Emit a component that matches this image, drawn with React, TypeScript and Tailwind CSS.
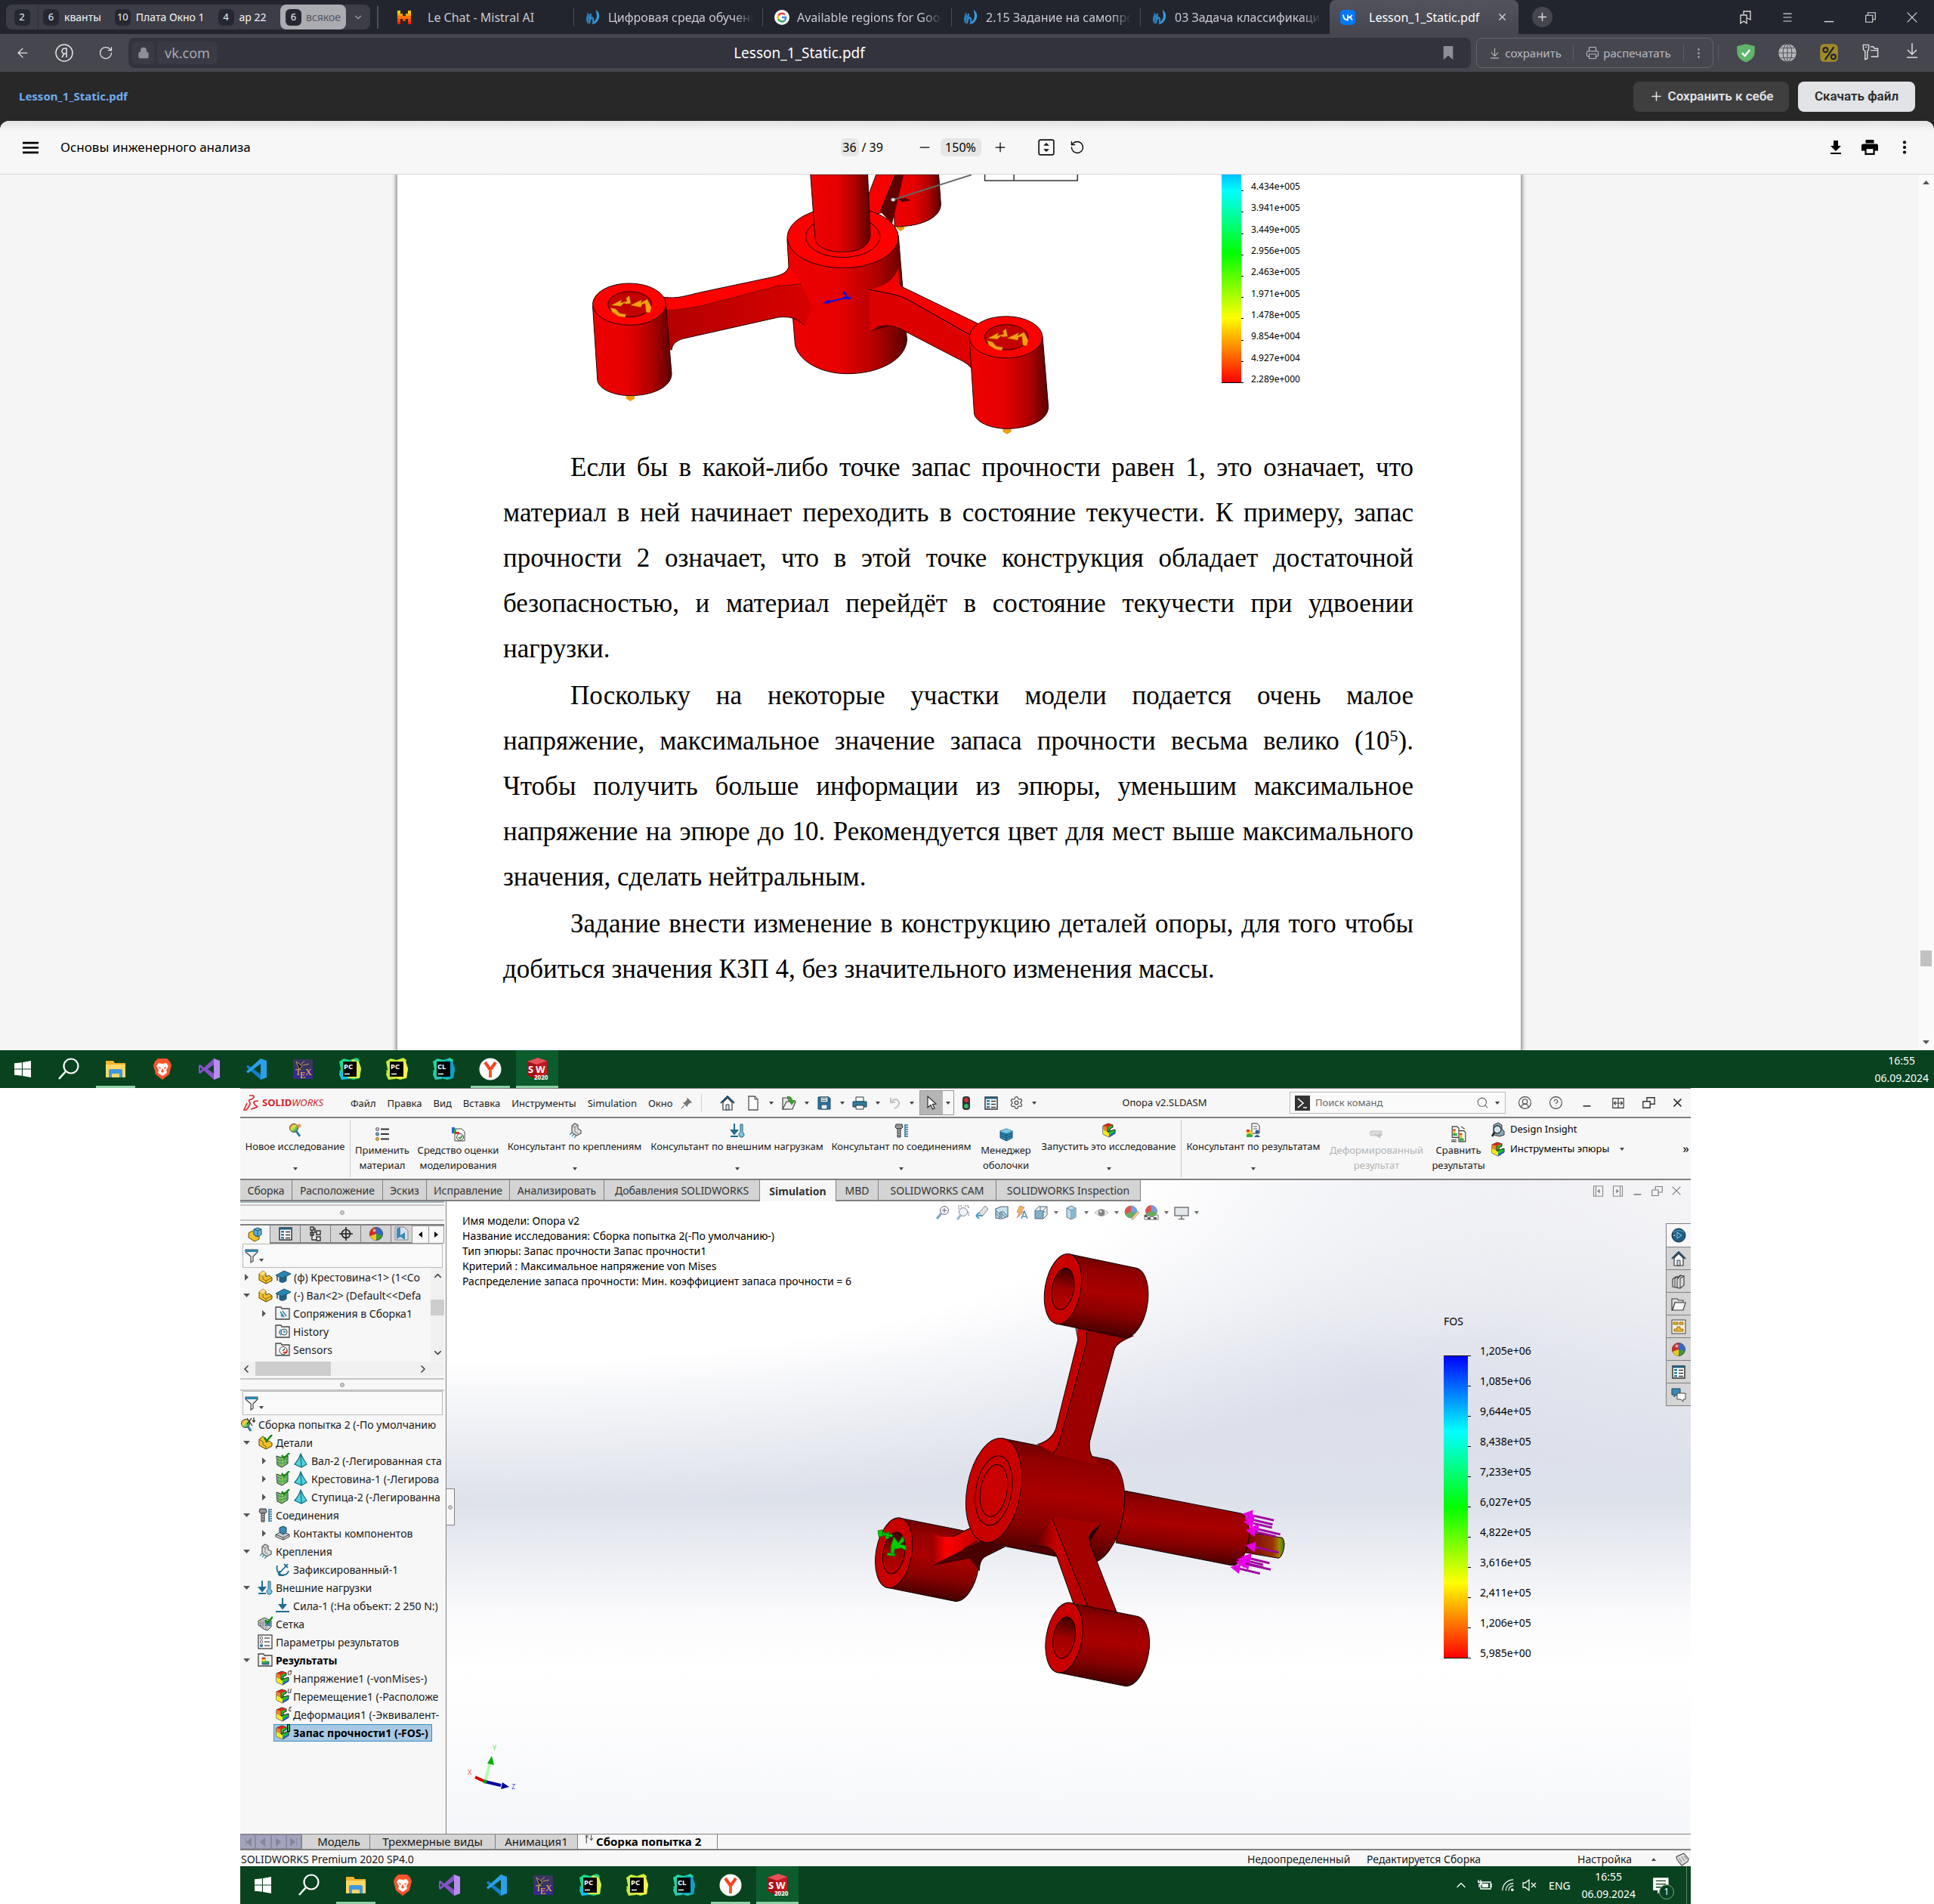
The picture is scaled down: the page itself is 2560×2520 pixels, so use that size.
import React from "react";
import {
  ArrowLeft, RotateCw, RotateCcw, Lock, X, Plus, Minus, ChevronDown, ChevronUp, ChevronLeft, ChevronRight,
  Search, EllipsisVertical, Printer, ArrowDownToLine, CircleUserRound, CircleHelp, Settings,
} from "lucide-react";

type Kids = { children?: React.ReactNode };

function Svg({ s = 20, vb = "0 0 20 20", children }: Kids & { s?: number; vb?: string }) {
  return (
    <svg width={s} height={s} viewBox={vb} fill="none" className="shrink-0" aria-hidden="true">
      {children}
    </svg>
  );
}

const Down = () => (
  <svg width="6" height="4" viewBox="0 0 6 4" className="shrink-0" aria-hidden="true"><path d="M0 0H6L3 4Z" fill="#444" /></svg>
);

/* ---------- browser ---------- */

function Chip({ n }: { n: string }) {
  return <span className="flex h-[22px] w-[21px] items-center justify-center rounded-md bg-[#262831] text-[13px] text-gray-100">{n}</span>;
}

const groups = [
  { n: "6", t: "кванты" },
  { n: "10", t: "Плата Окно 1" },
  { n: "4", t: "ар 22" },
];

const Flame = () => (
  <Svg s={20}>
    <path d="M3 2c0 3 3 4 2 8-1 3-2 6-1 9-3-2-4-7-2-11 .6-2 1-4 1-6Z" fill="#2d7fc1" />
    <path d="M14 0c5 4 5 9 3 13-2 4-5 6-9 6 4-3 7-7 7-11 0-3-1-5-1-8Z" fill="#3a9bdc" />
    <path d="M7 5 5 18M6 13c2-4 5-4 4 4" stroke="#2d8fd0" strokeWidth="2.200" />
  </Svg>
);
const Mistral = () => (
  <Svg s={20}>
    <path d="M1 1h4v4H1zM15 1h4v4h-4z" fill="#ffcd00" />
    <path d="M1 5h7v3H1zM12 5h7v3h-7z" fill="#ffa300" />
    <path d="M1 8h18v4H1z" fill="#ff7000" />
    <path d="M1 12h4v4H1zM8 12h4v3H8zM15 12h4v4h-4z" fill="#ff4900" />
    <path d="M1 16h4v3H1zM15 16h4v3h-4z" fill="#ff1a00" />
  </Svg>
);
const Google = () => (
  <Svg s={20}>
    <circle cx="10" cy="10" r="10" fill="#fff" />
    <path d="M14 6.400A5.500 5.500 0 0 0 5.200 7.600" stroke="#ea4335" strokeWidth="2.400" />
    <path d="M5.200 7.400a5.400 5.400 0 0 0 0 5.200" stroke="#fbbc05" strokeWidth="2.400" />
    <path d="M5.200 12.400a5.500 5.500 0 0 0 8.400 1.800" stroke="#34a853" strokeWidth="2.400" />
    <path d="M10 10h5.300a5.500 5.500 0 0 1-1.900 4.400" stroke="#4285f4" strokeWidth="2.300" />
  </Svg>
);
const Vk = () => (
  <Svg s={20}>
    <rect width="20" height="20" rx="5" fill="#0077ff" />
    <path d="M4 6.500c.2 4.500 2.300 7 6 7V6.500M15.500 6.500c-.6 2-2.500 3.400-5 3.400 2.500 0 4.600 1.600 5.300 3.700" stroke="#fff" strokeWidth="1.800" />
  </Svg>
);

const tabs = [
  { icon: <Mistral />, t: "Le Chat - Mistral AI", pad: true },
  { icon: <Flame />, t: "Цифровая среда обучени" },
  { icon: <Google />, t: "Available regions for Goog" },
  { icon: <Flame />, t: "2.15 Задание на самопров" },
  { icon: <Flame />, t: "03 Задача классификации" },
];

function TabStrip() {
  return (
    <div className="flex h-[45px] bg-[#23252e] text-[#c9cad0]">
      <div className="mt-[6px] ml-2 flex h-[33px] w-[482px] shrink-0 items-center rounded-lg bg-[#3d3d47] text-[14px] text-gray-100">
        <button className="flex h-full w-[43px] items-center justify-center border-r border-[#2e2f38]"><Chip n="2" /></button>
        {groups.map((g) => (
          <button key={g.t} className="flex h-full items-center gap-[7px] pr-[12px] pl-[6px]">
            <Chip n={g.n} /><span className="whitespace-nowrap">{g.t}</span>
          </button>
        ))}
        <button className="ml-auto flex h-full items-center gap-[6px] rounded-lg bg-[#abacb2] px-[7px] text-[#55565e]">
          <Chip n="6" /><span>всякое</span>
        </button>
        <button className="flex w-8 justify-center" aria-label="Группы"><ChevronDown size={14} color="#a5a5ad" /></button>
      </div>
      <div className="mx-[9px] mt-2 h-[30px] w-[2px] shrink-0 bg-[#50515a]" />
      {tabs.map((t) => (
        <button key={t.t} className="mt-[10px] flex h-[25px] w-[250px] items-center gap-[10px] overflow-hidden border-r border-[#4a4b54] pr-2 pl-[15px] text-left text-[16px] nth-[7]:border-0">
          {t.icon}
          <span className={t.pad ? "flex-1 pl-[11px]" : "flex-1 overflow-hidden whitespace-nowrap [mask-image:linear-gradient(to_right,black_85%,transparent_98%)]"}>{t.t}</span>
        </button>
      ))}
      <div className="flex h-[45px] w-[250px] items-center rounded-t-lg bg-linear-to-b from-[#53535d] to-[#46464f] px-[14px] text-[16px] text-white">
        <Vk /><span className="ml-[18px] flex-1">Lesson_1_Static.pdf</span>
        <button aria-label="Закрыть вкладку"><X size={15} color="#d8d8dc" /></button>
      </div>
      <button className="mt-[9px] ml-[18px] flex h-[27px] w-[27px] items-center justify-center rounded-full bg-[#46464f]" aria-label="Новая вкладка"><Plus size={17} color="#ddd" /></button>
      <div className="ml-auto flex h-[45px] items-center pr-[2px]">
        <button className="flex w-[55px] justify-center" aria-label="Закладки">
          <Svg s={20}><path d="M3 7h8v11l-4-3-4 3ZM7 6V2h9v11l-4-2" stroke="#ddd" strokeWidth="1.300" /></Svg>
        </button>
        <button className="flex w-[55px] justify-center" aria-label="Меню"><Svg s={14}><path d="M2 3H18M2 10H18M2 17H18" stroke="#ddd" strokeWidth="1.500" /></Svg></button>
        <button className="flex w-[55px] justify-center" aria-label="Свернуть"><Svg s={14}><path d="M1 18H19" stroke="#ddd" strokeWidth="2" /></Svg></button>
        <button className="flex w-[55px] justify-center" aria-label="Развернуть"><Svg s={14}><path d="M1 6H14V19H1ZM5 6V1H19V14H14" stroke="#ddd" strokeWidth="1.600" /></Svg></button>
        <button className="flex w-[55px] justify-center" aria-label="Закрыть"><Svg s={14}><path d="M1 1 19 19M19 1 1 19" stroke="#ddd" strokeWidth="1.600" /></Svg></button>
      </div>
    </div>
  );
}

function AddressBar() {
  return (
    <div className="flex h-[50px] items-center bg-[#46464f] text-[#c5c5cb]">
      <button className="ml-[2px] flex w-[55px] justify-center" aria-label="Назад"><ArrowLeft size={20} strokeWidth={1.500} color="#e4e4e8" /></button>
      <button className="flex w-[56px] justify-center" aria-label="Яндекс">
        <Svg s={24}><circle cx="10" cy="10" r="9.200" stroke="#e4e4e8" strokeWidth="1.200" /><path d="M12.500 15V5H10.400a2.900 2.900 0 0 0 0 5.800h2.100M10 10.800 7.500 15" stroke="#e4e4e8" strokeWidth="1.300" /></Svg>
      </button>
      <button className="flex w-[54px] justify-center" aria-label="Обновить"><RotateCw size={20} strokeWidth={1.500} color="#e4e4e8" /></button>
      <div className="flex h-10 flex-1 items-center rounded-lg bg-[#33333d] ml-[3px] text-[18px]">
        <div className="flex w-[120px] items-center">
          <span className="ml-[5px] flex h-[30px] w-[29px] items-center justify-center rounded-md bg-[#393a44]"><Lock size={16} fill="#8d8f98" color="#8d8f98" /></span>
          <a href="https://vk.com" className="ml-1 flex h-[30px] items-center rounded-md bg-[#393a44] px-[10px] text-[#a9aab2]">vk.com</a>
        </div>
        <span className="flex-1 text-center text-[19px] text-white">Lesson_1_Static.pdf</span>
        <button className="ml-[82px] mr-[21px]" aria-label="В закладки"><Svg s={18}><path d="M3 0H17V20L10 14 3 20Z" fill="#8d8f98" /></Svg></button>
      </div>
      <div className="ml-[7px] flex h-10 w-[314px] items-center rounded-lg border border-[#65656e] text-[15px] text-[#b9b9c0]">
        <button className="flex h-[22px] flex-1 items-center justify-center gap-[5px] border-r border-[#5c5c65]"><ArrowDownToLine size={17} strokeWidth={1.500} />сохранить</button>
        <button className="flex h-[22px] w-[146px] items-center justify-center gap-[5px] border-r border-[#5c5c65]"><Printer size={18} strokeWidth={1.500} />распечатать</button>
        <button className="flex w-[38px] justify-center" aria-label="Ещё"><EllipsisVertical size={17} strokeWidth={1.500} /></button>
      </div>
      <div className="ml-[6px] h-[22px] w-px bg-[#5c5c65]" />
      <div className="ml-[8px] flex pr-[2px]">
        <button className="flex w-[55px] justify-center" aria-label="Protect"><Svg s={26}><path d="M10 1 19 3V9C19 14 15 18 10 19.500 5 18 1 14 1 9V3Z" fill="#5fb56b" /><path d="M6 10l3 3 5-6" stroke="#fff" strokeWidth="1.800" /></Svg></button>
        <button className="flex w-[55px] justify-center" aria-label="Переводчик"><Svg s={26}><circle cx="10" cy="10" r="9" fill="#b5b6ba" /><path d="M1 10H19M10 1V19M3 5H17M3 15H17" stroke="#55565e" strokeWidth=".8" /><ellipse cx="10" cy="10" rx="4.500" ry="9" stroke="#55565e" strokeWidth=".8" /></Svg></button>
        <button className="flex w-[55px] justify-center" aria-label="Скидки"><Svg s={26}><rect x="1" y="1" width="18" height="18" rx="4" fill="#a08b27" /><path d="M15 4 6 17" stroke="#22242c" strokeWidth="1.800" /><circle cx="6.500" cy="7" r="2.300" stroke="#22242c" strokeWidth="1.700" /><circle cx="14.500" cy="14" r="2.300" stroke="#22242c" strokeWidth="1.700" /></Svg></button>
        <button className="flex w-[55px] justify-center" aria-label="Пароли"><Svg s={24}><path d="M2 2h6v5l-1.500 2v8L4 18V9L2 7ZM4 4.500h2M10 4h3l1.500 2H18v9h-7.500M10 8h8" stroke="#dcdce0" strokeWidth="1.200" /></Svg></button>
        <button className="flex w-[55px] justify-center" aria-label="Загрузки"><Svg s={20}><path d="M10 0V14M4 9l6 6 6-6M3 19H17" stroke="#dcdce0" strokeWidth="1.500" /></Svg></button>
      </div>
    </div>
  );
}

function VkHeader() {
  return (
    <div className="flex h-[65px] items-center bg-[#282828] pr-[25px] pl-[25px]">
      <a href="#file" className="text-[15px] font-bold text-[#71aaeb]">Lesson_1_Static.pdf</a>
      <button className="ml-auto flex h-10 w-[206px] items-center justify-center gap-[6px] rounded-lg bg-[#3f3f3f] font-['Roboto'] text-[17px] font-semibold text-[#e1e3e6]"><Plus size={19} />Сохранить к себе</button>
      <button className="ml-3 h-10 w-[155px] rounded-lg bg-[#e1e3e6] font-['Roboto'] text-[17px] font-semibold text-[#2a2a2a]">Скачать файл</button>
    </div>
  );
}

function PdfBar() {
  return (
    <div className="bg-[#282828]">
      <div className="flex h-[71px] items-center rounded-t-xl border-b border-[#d5d5d5] bg-[#f7f7f7] bg-linear-to-b from-[#e2e2e2] to-[#f7f7f7] to-20% pr-[28px] pl-[30px] text-[16px] text-black">
        <div className="flex flex-1 items-center gap-[29px]">
          <button aria-label="Содержание"><Svg s={21}><path d="M0 4H20M0 10H20M0 16H20" stroke="#000" strokeWidth="2.600" /></Svg></button>
          <span className="text-[17px]">Основы инженерного анализа</span>
        </div>
        <input aria-label="Страница" defaultValue="36" className="h-6 w-[24px] rounded-md bg-[#e6e6e6] text-center" />
        <span className="ml-1 w-[62px]">/ 39</span>
        <button className="flex w-[42px] justify-center" aria-label="Уменьшить"><Minus size={20} strokeWidth={1.500} /></button>
        <input aria-label="Масштаб" defaultValue="150%" className="h-6 w-[54px] rounded-md bg-[#e6e6e6] text-center" />
        <button className="flex w-[50px] justify-center" aria-label="Увеличить"><Plus size={20} strokeWidth={1.500} /></button>
        <button className="ml-[25px]" aria-label="По размеру страницы"><Svg s={22}><rect x="1" y="1" width="18" height="18" rx="2" stroke="#111" strokeWidth="1.500" /><path d="M6.500 8 10 4.500 13.500 8ZM6.500 12 10 15.500 13.500 12Z" fill="#111" /></Svg></button>
        <button className="ml-[20px] mr-[14px]" aria-label="Повернуть"><RotateCcw size={20} strokeWidth={1.600} /></button>
        <div className="flex flex-1 justify-end gap-[24px]">
          <button aria-label="Скачать"><Svg s={20}><path d="M7 1H13V8H17L10 15 3 8H7ZM3 17H17V19H3Z" fill="#000" /></Svg></button>
          <button aria-label="Печать"><Svg s={22}><path d="M5 1H15V5H5ZM2 6H18Q20 6 20 8V14H16V19H4V14H0V8Q0 6 2 6Z" fill="#000" /><path d="M6 12H14V17H6Z" fill="#fff" /></Svg></button>
          <button aria-label="Ещё"><Svg s={22}><g fill="#000"><circle cx="10" cy="4" r="1.900" /><circle cx="10" cy="10" r="1.900" /><circle cx="10" cy="16" r="1.900" /></g></Svg></button>
        </div>
      </div>
    </div>
  );
}

function PdfFigure() {
  const e = { stroke: "#200", strokeWidth: 1, vectorEffect: "non-scaling-stroke" as const };
  const boss = (dx: number, dy: number) => (
    <g transform={`translate(${dx} ${dy})`}>
      <path d="M98 905h16v18l-8 10-8-10Z" fill="#f39a10" />
      <path d="M35 555 44 850C46 885 75 911 106 911 145 911 183 880 184 825L173 545Z" fill="url(#cyl)" {...e} />
      <ellipse cx="104" cy="548" rx="69" ry="83" fill="#ff0000" {...e} />
      <ellipse cx="105" cy="548" rx="41" ry="50" fill="#c40000" {...e} />
      <path d="M70 552 90 530 88 542 100 536 98 524 104 514 107 545 98 547 94 543 88 556ZM106 552 128 530 126 542 138 528 146 560 143 582 136 580 134 545 128 548 126 560ZM68 562 78 566 86 584 98 588 96 600 84 596 72 580Z" fill="#f5a012" stroke="#9a5a00" strokeWidth=".5" vectorEffect="non-scaling-stroke" />
    </g>
  );
  return (
    <svg className="h-[350px] w-[674px] shrink-0" viewBox="0 33 961 1050" preserveAspectRatio="none" role="img" aria-label="Эпюра запаса прочности опоры">
      <defs>
        <linearGradient id="cyl"><stop offset="0" stopColor="#ee0000" /><stop offset=".45" stopColor="#e60000" /><stop offset=".75" stopColor="#b00000" /><stop offset="1" stopColor="#5a0000" /></linearGradient>
        <linearGradient id="arm"><stop offset="0" stopColor="#b00000" /><stop offset="1" stopColor="#d80000" /></linearGradient>
      </defs>
      <path d="M609 232h14v16l-7 10-7-10Z" fill="#f39a10" />
      <path d="M600 33H688L692 150C692 205 655 240 605 240Z" fill="url(#cyl)" {...e} />
      <path d="M570 33H606L580 185 540 200Z" fill="#f80000" {...e} />
      <path d="M606 33 578 180 600 230 622 33Z" fill="#5c0000" />
      <path d="M606 33 578 180" {...e} />
      <path d="M612 130 625 126 636 136 618 142Z" fill="#500000" />
      <path d="M402 290 405 400 417 710C425 780 470 824 515 824 575 824 625 770 628 690L618 430 612 275Z" fill="url(#cyl)" {...e} />
      <ellipse cx="507" cy="283" rx="105" ry="121" fill="#ff0000" {...e} />
      <ellipse cx="507" cy="280" rx="70" ry="82" fill="#ff0000" {...e} />
      <path d="M446 33 455 290C456 320 480 342 508 340 540 340 558 315 559 270L554 33Z" fill="url(#cyl)" {...e} />
      <path d="M160 520C195 525 200 520 240 500L375 440C395 430 400 420 405 400L428 467C415 472 400 473 385 476L240 555C215 566 195 572 160 572Z" fill="#ff0000" />
      <path d="M170 520C195 525 200 520 240 500L375 440C395 430 402 420 405 400M428 467C415 472 400 473 385 476L240 555C215 566 195 572 170 572" fill="none" {...e} />
      <path d="M150 572C195 572 215 566 240 555L385 476C400 473 415 472 428 467L450 560 435 632C420 602 405 595 385 600L205 685C190 695 185 710 184 730H150Z" fill="url(#arm)" />
      <path d="M435 632C420 602 405 595 385 600L205 685C190 695 185 710 184 730" fill="none" {...e} />
      <path d="M612 400 613 460 618 478 785 648 760 690 630 530C610 508 590 505 557 490 590 475 605 450 612 400Z" fill="#f40000" />
      <path d="M613 460 618 478 765 628M745 668 630 530C610 508 590 505 557 490" fill="none" {...e} />
      <path d="M557 490C590 505 610 508 630 530L760 690V800H748C740 780 730 770 722 762L615 645C595 630 575 632 557 660Z" fill="#dc0000" />
      <path d="M745 668 630 530C610 508 590 505 557 490M748 795C740 780 730 770 722 762L615 645C600 632 585 630 573 638" fill="none" {...e} />
      <path d="M557 660C570 635 585 628 600 636 585 638 570 648 557 660Z" fill="#500000" />
      {boss(0, 0)}
      {boss(711, 131)}
      <path d="M515 522 475 541M515 522 510 500" stroke="#1010e0" strokeWidth="2" vectorEffect="non-scaling-stroke" />
      <path d="M468 545 480 530 484 544ZM508 494 516 508 507 510ZM508 518h14v10h-14Z" fill="#1010e0" />
      <path d="M602 133 750 34" stroke="#666" strokeWidth="2" vectorEffect="non-scaling-stroke" />
      <ellipse cx="602" cy="133" rx="4" ry="7" fill="#ddd" stroke="#555" />
      <path d="M775 33V57H950V33M830 33V57" fill="none" stroke="#333" strokeWidth="1.500" vectorEffect="non-scaling-stroke" />
    </svg>
  );
}

const pdfScale = ["4.434e+005", "3.941e+005", "3.449e+005", "2.956e+005", "2.463e+005", "1.971e+005", "1.478e+005", "9.854e+004", "4.927e+004", "2.289e+000"];

function PdfViewer() {
  return (
    <div className="flex h-[1159px] overflow-hidden bg-[#f5f5f5]">
      <div className="flex flex-1 justify-center">
        <article className="w-[1487px] bg-white pr-[142px] pl-[140px] font-['Liberation_Serif',serif] text-[35px] leading-[60px] text-black shadow-[0_0_5px_2px_#888]">
          <div className="flex pl-[94px] font-['Noto_Sans']">
            <PdfFigure />
            <div className="ml-[183px] flex">
              <svg width="29" height="277" viewBox="0 0 29 277" className="shrink-0" aria-hidden="true">
                <defs><linearGradient id="pl" x1="0" y1="0" x2="0" y2="1"><stop offset="0" stopColor="#00bfff" /><stop offset=".08" stopColor="#00ffff" /><stop offset=".38" stopColor="#00ff00" /><stop offset=".69" stopColor="#ffff00" /><stop offset="1" stopColor="#ff0000" /></linearGradient></defs>
                <rect width="26" height="275" fill="url(#pl)" />
                <path d="M26 21.500h3M26 49.500h3M26 78.500h3M26 106.500h3M26 134.500h3M26 162.500h3M26 190.500h3M26 219.500h3M26 247.500h3M0 275.500H29" stroke="#000" />
              </svg>
              <div className="mt-[9px] ml-[10px] flex h-[269px] flex-col justify-between text-[12px] leading-[14px]">
                {pdfScale.map((v) => <span key={v}>{v}</span>)}
              </div>
            </div>
          </div>
          <div className="mt-2 flex flex-col gap-[2px] text-justify indent-[89px]">
            <p>Если бы в какой-либо точке запас прочности равен 1, это означает, что материал в ней начинает переходить в состояние текучести. К примеру, запас прочности 2 означает, что в этой точке конструкция обладает достаточной безопасностью, и материал перейдёт в состояние текучести при удвоении нагрузки.</p>
            <p>Поскольку на некоторые участки модели подается очень малое напряжение, максимальное значение запаса прочности весьма велико (10<sup className="text-[22px] leading-[0]">5</sup>). Чтобы получить больше информации из эпюры, уменьшим максимальное напряжение на эпюре до 10. Рекомендуется цвет для мест выше максимального значения, сделать нейтральным.</p>
            <p>Задание внести изменение в конструкцию деталей опоры, для того чтобы добиться значения КЗП 4, без значительного изменения массы.</p>
          </div>
        </article>
      </div>
      <div className="flex w-[21px] flex-col items-center justify-between bg-[#fafafa] py-2">
        <svg width="9" height="5" viewBox="0 0 9 5"><path d="M0 5H9L4.500 0Z" fill="#555" /></svg>
        <div className="mt-[1000px] h-[21px] w-[15px] bg-[#c1c1c1]" />
        <svg width="9" height="5" viewBox="0 0 9 5" className="mt-[85px]"><path d="M0 0H9L4.500 5Z" fill="#555" /></svg>
      </div>
    </div>
  );
}

/* ---------- task bar ---------- */

const JB = ({ a, b, c, t }: { a: string; b: string; c: string; t: string }) => (
  <Svg s={30} vb="0 0 30 30">
    <path d="M1 5 7 1 15 3 24 0 28 3 26 10 30 14 28 27 20 29 12 27 4 29 1 22 3 15Z" fill={a} />
    <path d="M18 2 27 5 30 14 28 27 12 27Z" fill={b} />
    <path d="M1 16 4 29 14 28Z" fill={c} />
    <rect x="6" y="5" width="18" height="20" fill="#000" />
    <text x="7" y="15" fontSize="9.500" fontWeight="700" fill="#fff" fontFamily="Noto Sans">{t}</text>
    <path d="M8 21.500H15" stroke="#fff" strokeWidth="1.500" />
  </Svg>
);

const idle = "border-transparent";
const apps: { id: string; cls: string; icon: React.ReactNode }[] = [
  { id: "Поиск", cls: idle, icon: <Svg s={30} vb="0 0 30 30"><circle cx="18" cy="11" r="9.500" stroke="#fff" strokeWidth="2.200" /><path d="M11 18 2 28" stroke="#fff" strokeWidth="2.600" /></Svg> },
  { id: "Проводник", cls: "border-[#8fcfa5]", icon: <Svg s={30} vb="0 0 30 30"><path d="M2 4H12L14 7H28V26H2Z" fill="#f2b32a" /><path d="M2 9H28V26H2Z" fill="#ffd766" /><path d="M6 26V17Q6 15 8 15H22Q24 15 24 17V26H20V21H10V26Z" fill="#3f97e0" /></Svg> },
  { id: "Brave", cls: idle, icon: <Svg s={30} vb="0 0 30 30"><path d="M9 1H21L25 5 27 10 24 22 15 29 6 22 3 10 5 5Z" fill="#fb542b" /><path d="M10 7 15 8 20 7 23 11 20 16 21 20 15 24 9 20 10 16 7 11Z" fill="#fff" /><path d="M9 12 13 13 12 15ZM21 12 17 13 18 15ZM15 14 17 18 15 20 13 18Z" fill="#fb542b" /></Svg> },
  { id: "Visual Studio", cls: idle, icon: <Svg s={30} vb="0 0 30 30"><path d="M21 1 29 4V26L21 29 8 17 3 21 1 20V10L3 9 8 13Z" fill="#8650c8" /><path d="M21 1 29 4V26L21 29Z" fill="#b98af0" /><path d="M21 9V21L13 15ZM3 12.500V17.500L5.500 15Z" fill="#08421f" /></Svg> },
  { id: "VS Code", cls: idle, icon: <Svg s={30} vb="0 0 30 30"><path d="M21 1 29 4V26L21 29 2 12 4 9.500 21 22Z" fill="#1080cc" /><path d="M21 1 29 4V26L21 29V8L4 20.500 2 18Z" fill="#2a9fea" /></Svg> },
  { id: "TeX", cls: idle, icon: <Svg s={28} vb="0 0 28 28"><rect x="1" y="1" width="26" height="26" fill="#372a8c" /><path d="M1 1H27V11L14 18 1 12Z" fill="#3a3560" /><path d="M5 4 13 10 9 14ZM11 8l5-5M14 9l8-2" fill="#151020" stroke="#b3a35a" /><text x="4" y="22" fontSize="12" fill="#f0c030" fontFamily="Liberation Serif">T</text><text x="10" y="26" fontSize="12" fill="#f0c030" fontFamily="Liberation Serif">E</text><text x="17" y="22" fontSize="12" fill="#f0c030" fontFamily="Liberation Serif">X</text></Svg> },
  { id: "PyCharm", cls: idle, icon: <JB a="#21d789" b="#d8f04a" c="#07c3f2" t="PC" /> },
  { id: "PyCharm CE", cls: idle, icon: <JB a="#c5f03c" b="#f4f24a" c="#c8e63c" t="PC" /> },
  { id: "CLion", cls: idle, icon: <JB a="#21d7a0" b="#0aa0c8" c="#22c8b0" t="CL" /> },
  { id: "Яндекс Браузер", cls: "border-[#8fcfa5]", icon: <Svg s={30} vb="0 0 30 30"><circle cx="15" cy="15" r="14.500" fill="#fff" /><path d="M8 6 15 16 22 6" stroke="#fc3f1d" strokeWidth="4" /><path d="M15 15V26" stroke="#fc5a1d" strokeWidth="4" /></Svg> },
  { id: "SolidWorks", cls: "border-[#8fcfa5] bg-[#0d5c2d]", icon: <Svg s={30} vb="0 0 30 30"><path d="M2 5 16 0 28 4V22L14 28 2 23Z" fill="#c11920" /><path d="M2 5 16 0 28 4 14 9Z" fill="#e4525a" /><path d="M14 9V28L2 23V5Z" fill="#a60f16" /><text x="3" y="20" fontSize="13" fontWeight="700" fill="#fff" fontFamily="Noto Sans">S</text><text x="13" y="20" fontSize="13" fontWeight="700" fill="#fff" fontFamily="Noto Sans">W</text><text x="11" y="29" fontSize="8" fontWeight="700" fill="#fff" fontFamily="Noto Sans">2020</text></Svg> },
];

function TaskBar({ children }: Kids) {
  return (
    <div className="flex h-[50px] bg-[#08421f] text-[15px] text-white">
      <button className="flex w-[60px] items-center justify-center" aria-label="Пуск">
        <Svg s={22}><path d="M0 3 9 2V9.500H0ZM10 1.800 20 0V9.500H10ZM0 10.500H9V18L0 17ZM10 10.500H20V20L10 18.200Z" fill="#fff" /></Svg>
      </button>
      {apps.map((a) => (
        <button key={a.id} aria-label={a.id} className={a.id === "SolidWorks" ? "flex w-[62px] justify-center px-[3px]" : "flex w-[62px] justify-center px-[5px]"}>
          <span className={"flex h-full w-full items-center justify-center border-b-3 pt-[2px] " + a.cls}>{a.icon}</span>
        </button>
      ))}
      <div className="ml-auto flex items-center">{children}</div>
    </div>
  );
}

const Clock = () => (
  <div className="text-center text-[14px] leading-[23px]"><div>16:55</div><div>06.09.2024</div></div>
);

/* ---------- SolidWorks icons ---------- */

const ic = {
  home: <Svg><path d="M1 10 10 1 19 10" stroke="#1d4f6d" strokeWidth="2" /><path d="M4 9V19H16V9L10 3Z" fill="#fff" stroke="#333" strokeWidth="1.200" /><path d="M8 12H12V19H8Z" stroke="#333" fill="#cde" /></Svg>,
  doc: <Svg><path d="M4 1H12L16 5V19H4Z" fill="#fff" stroke="#555" strokeWidth="1.300" /><path d="M12 1V5H16" stroke="#555" /></Svg>,
  open: <Svg><path d="M2 3H8L10 5V18H2Z" fill="#e6e6e6" stroke="#444" strokeWidth="1.200" /><path d="M2 18 7 8H19L15 18Z" fill="#eee" stroke="#444" strokeWidth="1.200" /><path d="M8 2Q14 1 14 8M11 7 14 11 17 7Z" stroke="#3a9a2e" strokeWidth="2" fill="#3a9a2e" /></Svg>,
  save: <Svg><path d="M2 2H16L18 4V18H2Z" fill="#2a78a0" stroke="#17425a" /><path d="M5 2H15V9H5ZM6 12H14V18H6Z" fill="#e8eef2" stroke="#17425a" /><path d="M6.500 4H13M6.500 6.500H13" stroke="#567" /></Svg>,
  print: <Svg><path d="M5 2H15V8H5Z" fill="#fff" stroke="#333" /><path d="M1 8H19V15H1Z" fill="#2f7da6" stroke="#17425a" /><path d="M5 13H15V18H5Z" fill="#fff" stroke="#333" /></Svg>,
  undo: <Svg><path d="M4 3V9H10M4 9Q12 1 15 9 16 14 9 17" stroke="#c2c2c2" strokeWidth="2" /></Svg>,
  arrow: <Svg><path d="M5 1V16L9 12.500 11.500 18 14 17 11.500 11.500 16 11Z" fill="#fff" stroke="#222" strokeWidth="1.100" /></Svg>,
  light: <Svg><rect x="5" y="1" width="10" height="18" rx="4" fill="#333" /><circle cx="10" cy="6" r="3" fill="#c33" /><circle cx="10" cy="14" r="3" fill="#3b6" /></Svg>,
  list: <Svg><rect x="2" y="2" width="16" height="16" fill="#fff" stroke="#333" strokeWidth="1.500" /><path d="M2 2H18V4.500H2Z" fill="#1f5f86" /><path d="M4 6H8V8.500H4ZM4 10H8V12.500H4ZM4 14H8V16.500H4Z" fill="#2a78a0" /><path d="M10 7.500H16M10 11.500H16M10 15.500H16" stroke="#333" strokeWidth="1.400" /></Svg>,
  lens: <Svg><defs><linearGradient id="rb" x1="0" x2="1" y1="0" y2="1"><stop offset="0" stopColor="#f05030" /><stop offset=".4" stopColor="#f0e040" /><stop offset=".7" stopColor="#50c050" /><stop offset="1" stopColor="#4080d0" /></linearGradient></defs><circle cx="8" cy="7" r="5.500" fill="url(#rb)" stroke="#444" /><path d="M11 11 16 18" stroke="#2a78a0" strokeWidth="3" /><path d="M15 1v6M12 4h6M13 2l4 4M17 2l-4 4" stroke="#e08020" strokeWidth=".9" /></Svg>,
  study: <Svg><circle cx="7" cy="9" r="5.500" fill="url(#rb)" stroke="#444" /><path d="M10 13 14 19" stroke="#2a78a0" strokeWidth="3" /><path d="M9 2 16 12M15 2 9 10M18 1v6M16 5l2 2 2-2" stroke="#333" strokeWidth="1.300" /></Svg>,
  mat: <Svg><path d="M8 3.500H19M8 10H19M8 16.500H19" stroke="#333" strokeWidth="2" /><circle cx="3.500" cy="3.500" r="2" fill="#ccc" stroke="#555" /><circle cx="3.500" cy="10" r="2" fill="#6bc" stroke="#357" /><circle cx="3.500" cy="16.500" r="2" fill="#eb3" stroke="#863" /></Svg>,
  eval: <Svg><path d="M5 3H14L18 7V19H5Z" fill="#fff" stroke="#444" /><path d="M1 1H5V9H1Z" fill="#2060e0" /><path d="M4 3H7V10H4Z" fill="#30b040" /><path d="M5 7H11V10H5Z" fill="#e03020" /><circle cx="12" cy="14" r="4.500" fill="#eee" stroke="#444" /><path d="M10 14l2 2 3-4" stroke="#2a9a2a" strokeWidth="1.700" /></Svg>,
  fix: <Svg><path d="M6 4 10 1 14 3V8L18 10V14L12 17 6 13Z" fill="#ddd" stroke="#555" strokeWidth="1.200" /><path d="M10 6V12L14 14M6 4 10 6 14 3" stroke="#777" /><path d="M6 13 3 16M9 15 6 18M12 17 9 20" stroke="#3a86a8" strokeWidth="1.200" /></Svg>,
  load: <Svg><path d="M6 1V14M2 10 6 15 10 10ZM1 18H11" stroke="#1f6e94" strokeWidth="2" fill="#1f6e94" /><path d="M14 2H17V12.500A3.500 3.500 0 1 1 14 12.500Z" fill="#7cc4e0" stroke="#2a5a74" /></Svg>,
  bolt: <Svg><path d="M3 2H11L12 6 10 8H4L2 6Z" fill="#999" stroke="#333" /><path d="M5 8H9V19H5Z" fill="#ccc" stroke="#333" /><path d="M5 11H9M5 14H9M5 17H9" stroke="#333" /><path d="M15 2V19M15 3h4M15 6h4M15 9h4M15 12h4M15 15h4M15 18h4" stroke="#2a78a0" strokeWidth="1.500" /></Svg>,
  shell: <Svg><path d="M2 6 10 3 18 6V15L10 19 2 15Z" fill="#2e86b2" stroke="#17506e" /><path d="M2 6 10 9 18 6 10 3Z" fill="#7cc8e8" /><path d="M2 9 10 12 18 9M2 12 10 15 18 12M10 9V19" stroke="#17506e" /></Svg>,
  plot: <Svg><path d="M2 4 9 1 15 3V6L11 8V11L18 9V14L10 19 2 15Z" fill="#20c030" stroke="#222" /><path d="M2 4 9 1 15 3 8 6Z" fill="#e02818" /><path d="M2 4 8 6V12L2 9Z" fill="#f08020" /><path d="M2 9 8 12 10 13V19L2 15Z" fill="#f4e820" /><path d="M10 16.500 18 12V14L10 19Z" fill="#2060e0" /><path d="M8 6V12L11 11M8 12 10 13" stroke="#222" strokeWidth=".8" /></Svg>,
  plotDoc: <Svg><path d="M8 1H15L18 4V14H8Z" fill="#fff" stroke="#333" /><path d="M10 5h5M10 8h5" stroke="#555" /><path d="M1 9H5L9 13V19H1Z" fill="#f0d030" /><path d="M1 9H5V12H1Z" fill="#e03020" /><path d="M5 14 9 16V19H1V16Z" fill="#30b040" /><circle cx="15" cy="12" r="2.500" fill="#2a5a94" /><path d="M11 19Q15 13 19 19Z" fill="#2a5a94" /></Svg>,
  greyBox: <Svg><path d="M2 6H17V12H2Z" fill="#ddd" stroke="#c2c2c2" /><path d="M8 10 14 14V10L16 12" stroke="#c2c2c2" strokeWidth="2" /></Svg>,
  cmp: <Svg s={22}><path d="M2 1H8L10 3V14H2ZM10 6H16L18 8V19H10Z" fill="#fff" stroke="#333" /><path d="M3 4h3v7h-3ZM11 9h3v8h-3Z" fill="#f0c030" /><path d="M3 4h3v2h-3ZM11 9h3v2h-3Z" fill="#e03020" /><path d="M3 9h5v3h-5ZM11 15h5v3h-5Z" fill="#30b040" /><path d="M1 17h6M1 19h6M13 1l4 3" stroke="#333" /></Svg>,
  insight: <Svg><path d="M4 4 10 1 15 4V9L18 12V17L12 19 4 17Z" fill="#8ab" stroke="#333" /><circle cx="9" cy="10" r="5" fill="#cfe4ee" stroke="#333" strokeWidth="1.300" /><path d="M5 14 2 19" stroke="#222" strokeWidth="2.500" /></Svg>,
  funnel: <Svg><path d="M2 2H18V5L12 11V17L9 19V11L2 5Z" fill="#eee" stroke="#444" strokeWidth="1.200" /><path d="M2 2H18V5H2Z" fill="#2a86b0" /></Svg>,
  part: <Svg><path d="M2 6 7 2 11 5V10L15 8 19 11V15L11 19 2 14Z" fill="#f2c12e" stroke="#5a4000" /><path d="M2 6 7 9V13L11 15 19 11M11 15V19M7 9 11 5" stroke="#8a6500" /><path d="M2 6 7 2 11 5 7 9Z" fill="#ffe07a" /></Svg>,
  partOk: <Svg><path d="M2 6 7 2 11 5V10L15 8 19 11V15L11 19 2 14Z" fill="#f2c12e" stroke="#5a4000" /><path d="M2 6 7 9V13L11 15V19" stroke="#8a6500" /><path d="M9 4 12 8 19 0" stroke="#128a12" strokeWidth="2.600" /></Svg>,
  asm: <Svg><path d="M1 8 6 5 10 8V12L15 12V16L9 19 1 14Z" fill="#f2c12e" stroke="#6b4d00" /><path d="M8 3 13 1 18 3V10L13 13 8 10Z" fill="#5fb3dc" stroke="#17506e" /><path d="M8 3 13 5 18 3M13 5V13" stroke="#17506e" /></Svg>,
  cap: <Svg><path d="M0 8 11 2 20 6 9 12Z" fill="#2a86b0" stroke="#1d4f6d" /><path d="M5 11V16Q9 19 14 15V9L9 12Z" fill="#1f6488" stroke="#1d4f6d" /><path d="M2 9V15" stroke="#444" strokeWidth="1.500" /></Svg>,
  folderClip: <Svg><path d="M1 2H8L9 4H19V18H1Z" fill="#f2f2f2" stroke="#444" strokeWidth="1.300" /><path d="M7 8 12 15M10 7 15 14M8 12 10 15" stroke="#2a86b0" strokeWidth="1.400" /></Svg>,
  folderHist: <Svg><path d="M1 2H8L9 4H19V18H1Z" fill="#f2f2f2" stroke="#444" strokeWidth="1.300" /><circle cx="12" cy="11" r="4" stroke="#444" /><path d="M12 9V11H14M8 8Q4 11 8 15" stroke="#2a86b0" strokeWidth="1.500" /></Svg>,
  folderSens: <Svg><path d="M1 2H8L9 4H19V18H1Z" fill="#f2f2f2" stroke="#444" strokeWidth="1.300" /><circle cx="11" cy="11.500" r="5" fill="#fff" stroke="#444" /><path d="M10 12 13 9" stroke="#333" strokeWidth="1.300" /><path d="M11 14h4l1-3" stroke="#e03020" strokeWidth="1.800" /></Svg>,
  folderRes: <Svg><path d="M1 2H8L9 4H19V18H1Z" fill="#f2f2f2" stroke="#444" strokeWidth="1.300" /><path d="M6 7H10V12H15V16H6Z" fill="#30b040" stroke="#333" strokeWidth=".6" /><path d="M6 7H10V9H6Z" fill="#e03020" /><path d="M6 9H10V12H6Z" fill="#f0e030" /><path d="M7 14.500H15V16H7Z" fill="#2060e0" /></Svg>,
  mesh: <Svg><path d="M2 4 8 6 17 4V14L9 19 3 16Z" fill="#8fd05a" stroke="#333" /><path d="M5 5V17M8 6V18M12 6V17M15 5V15M2 8 8 10 17 8M2 12 8 14 17 12" stroke="#386" strokeWidth=".8" /><path d="M9 3 12 7 19 0" stroke="#128a12" strokeWidth="2.400" /></Svg>,
  tetra: <Svg><path d="M10 1Q13 8 18 15L11 19 2 15Q8 8 10 1Z" fill="#4fd3dd" stroke="#1a6c80" strokeWidth="1.200" /><path d="M10 1 11 19" stroke="#1a6c80" strokeWidth="1.200" /></Svg>,
  contact: <Svg><path d="M1 12 9 8 19 12V15L11 19 1 15Z" fill="#ccc" stroke="#444" /><path d="M1 12 11 16 19 12M11 16V19" stroke="#444" /><path d="M6 3 11 1 15 3V9L11 12 6 9Z" fill="#3a8ab4" stroke="#17425a" /></Svg>,
  fixed: <Svg><path d="M3 5Q1 14 8 17M8 17Q16 19 18 12M4 17 17 3M12 3l5 5M6 12v6h6" stroke="#1f6e94" strokeWidth="1.800" /></Svg>,
  force: <Svg><path d="M10 0V13M6 9 10 14 14 9ZM1 18H19" stroke="#1f6e94" strokeWidth="2" fill="#1f6e94" /></Svg>,
  meshG: <Svg><path d="M1 6 9 2 18 6V14L13 19 8 17 1 12Z" fill="#ccc" stroke="#444" /><path d="M4 5V14M7 4V16M11 5V18M1 9H18M2 12H18" stroke="#777" strokeWidth=".8" /><path d="M9 6H17V13H11Z" fill="#3a8ab4" /><path d="M10 5 13 9 20 1" stroke="#128a12" strokeWidth="2.600" /></Svg>,
  params: <Svg><rect x="1" y="1" width="18" height="18" fill="#f5f5f5" stroke="#444" strokeWidth="1.300" /><path d="M9 5H16M9 10H16M9 15H16" stroke="#666" strokeWidth="1.400" /><circle cx="5" cy="5" r="1.700" stroke="#666" /><circle cx="5" cy="10" r="1.700" stroke="#666" /><circle cx="5" cy="15" r="2" fill="#1f6e94" /></Svg>,
  tree: <Svg><path d="M3 1H7V5H3ZM3 8H7V12H3ZM5 5V18H11M7 3H9V8H11M11 6H16V11H11ZM11 14H16V19H11Z" stroke="#333" strokeWidth="1.400" fill="#eee" /></Svg>,
  target: <Svg><circle cx="10" cy="10" r="5.500" stroke="#222" strokeWidth="1.600" /><path d="M10 1V19M1 10H19" stroke="#222" strokeWidth="1.600" /></Svg>,
  ball: <Svg><circle cx="10" cy="10" r="8.500" fill="#3b9a3a" stroke="#444" /><path d="M10 10V1.500A8.500 8.500 0 0 0 2 13Z" fill="#d62a24" /><path d="M10 10 2 13A8.500 8.500 0 0 0 10 18.500Z" fill="#f0c52a" /><path d="M10 10V1.500A8.500 8.500 0 0 1 18 12Z" fill="#2b6bd0" /><circle cx="7.500" cy="5.500" r="2" fill="#fff" opacity=".6" /></Svg>,
  ballEdit: <Svg><circle cx="9" cy="9" r="8" fill="#3b9a3a" stroke="#777" /><path d="M9 9V1A8 8 0 0 0 2 12Z" fill="#d62a24" /><path d="M9 9V1A8 8 0 0 1 17 11Z" fill="#4b8be0" /><path d="M9 9 2 12A8 8 0 0 0 9 17Z" fill="#3fa04a" /><path d="M18 8 20 10 12 19 10 19 10 17Z" fill="#f2c870" stroke="#965" strokeWidth=".7" /></Svg>,
  ballScene: <Svg><path d="M1 13H19V19H1Z" fill="#fff" stroke="#555" /><path d="M1 13h4v3H1zM9 13h4v3H9zM5 16h4v3H5zM13 16h4v3h-4z" fill="#333" /><circle cx="10" cy="8" r="7.500" fill="#3b9a3a" stroke="#777" /><path d="M10 8V.5A7.500 7.500 0 0 0 3 11Z" fill="#d62a24" /><path d="M10 8V.5A7.500 7.500 0 0 1 17 10Z" fill="#4b8be0" /></Svg>,
  fold: <Svg><path d="M1 1H13L18 6V18H1Z" fill="#dde" stroke="#888" /><path d="M3 3 8 1V12L14 8V18L8 14 3 17Z" fill="#3a8ab4" /></Svg>,
  globe: <Svg><circle cx="10" cy="10" r="9" fill="#1f5f86" stroke="#123" /><path d="M8 6l6 4-6 4Z" stroke="#8fd0ee" /><path d="M3 6Q10 1 17 6" stroke="#5fa8cc" /><circle cx="4.500" cy="10" r="1" fill="#bde" /></Svg>,
  books: <Svg><path d="M2 7 6 4 9 5 12 2 17 3V15L12 19 2 17Z" fill="#ddd" stroke="#444" strokeWidth="1.200" /><path d="M5 6V18M8 7V19M12 6V19M5 6 9 3M8 7 13 2M12 6 17 3" stroke="#444" strokeWidth="1.100" /></Svg>,
  folder: <Svg><path d="M1 3H8L10 5H16V8H5L2 18H1Z" fill="#ddd" stroke="#444" strokeWidth="1.200" /><path d="M5 8H19L16 18H2Z" fill="#f4f4f4" stroke="#444" strokeWidth="1.200" /></Svg>,
  yellow: <Svg><rect x="1" y="1" width="18" height="18" fill="#f5f0dc" stroke="#444" /><path d="M3 4H9V7H3ZM11 4H16V7H11ZM8 10H12V13H16V16H4V13H8Z" fill="#f2b82a" stroke="#7a5a00" strokeWidth=".8" /></Svg>,
  chat: <Svg><path d="M1 2H12V10H7L4 13V10H1Z" fill="#3a8ab4" stroke="#17425a" /><path d="M8 8H19V16H16V19L13 16H8Z" fill="#fff" stroke="#444" /></Svg>,
  zoom: <Svg><circle cx="12" cy="7" r="5.500" fill="#eef4f8" stroke="#445" /><path d="M12 4V10M9 7H15" stroke="#445" /><path d="M8 11 2 18" stroke="#5a8cac" strokeWidth="3" /></Svg>,
  zoomArea: <Svg><circle cx="11" cy="9" r="5.500" fill="#eef4f8" stroke="#667" /><path d="M5 5V1H9M13 1H18V5M18 9v6" stroke="#445" strokeDasharray="2 1" /><path d="M8 13 3 19" stroke="#7aa8c4" strokeWidth="3" /></Svg>,
  wand: <Svg><path d="M6 10 14 1 18 5 10 15Z" fill="#ddd" stroke="#666" /><path d="M2 14H11M2 14 6 10M2 14 6 18" stroke="#2a86b0" strokeWidth="2.200" /></Svg>,
  section: <Svg><path d="M2 5 9 2H18V15L11 18H10V9H8V18L2 17Z" fill="#bcdcec" stroke="#345" strokeWidth="1.200" /><path d="M2 7 8 13M2 11 8 17M11 8 17 14M11 12 15 16" stroke="#2a78a0" strokeWidth="1.200" /></Svg>,
  annot: <Svg><path d="M8 1 14 3 10 8 13 9 4 17 7 10 4 9Z" fill="#f0a030" stroke="#a55" strokeWidth=".7" /><path d="M10 18 14 8 18 18M11.500 15H17" stroke="#2a78a0" strokeWidth="1.500" /></Svg>,
  cube: <Svg><path d="M2 7H13V18H2Z" fill="#5f9fc0" stroke="#345" /><path d="M2 7 7 2H18L13 7M18 2V13L13 18M9 2V7M16 9H12" fill="#e4eef4" stroke="#345" /></Svg>,
  cyl: <Svg><path d="M4 4 10 1 16 4V16L10 19 4 16Z" fill="#a8d4e8" stroke="#456" /><path d="M4 4 10 7 16 4M10 7V19" stroke="#456" /><path d="M10 7 16 4V16L10 19Z" fill="#6aa8c4" /></Svg>,
  eye: <Svg><path d="M1 10Q10 1 19 10 10 19 1 10Z" fill="#eee" stroke="#999" /><circle cx="10" cy="10" r="4.500" fill="#666" /><circle cx="9" cy="8.500" r="1.300" fill="#fff" /></Svg>,
  screen: <Svg><path d="M1 3H19V14H1Z" fill="#dde2e8" stroke="#555" strokeWidth="1.400" /><path d="M10 14V18M6 18.500H14" stroke="#555" strokeWidth="1.600" /></Svg>,
  win2: <Svg s={17}><path d="M1 8H12V18H1ZM7 8V2H19V12H12" stroke="#333" strokeWidth="1.600" /></Svg>,
};

/* ---------- SolidWorks window ---------- */

const quick: React.ReactNode[] = [ic.doc, ic.open, ic.save, ic.print, ic.undo];

function SwTitle() {
  return (
    <div className="flex h-[40px] items-center border-t border-b-2 border-[#808080] bg-[#f7f7f7] text-[13px] text-[#1a1a1a]">
      <div className="flex w-[611px] shrink-0 items-center border-r border-[#d0d0d0]">
        <div className="ml-[4px] flex w-[128px] items-center gap-[3px] text-[#d8262c]">
          <svg width="22" height="22" viewBox="0 0 22 22" fill="none" aria-hidden="true"><path d="M8 1H13Q16 3 11 6L7 7M7 8Q12 11 4 20L1 20 5 11M20 8Q13 8 14 11T18 15 10 19" stroke="#d8262c" strokeWidth="1.700" /></svg>
          <span className="text-[13px]"><b>SOLID</b><i>WORKS</i></span>
        </div>
        <div className="ml-[14px] flex gap-[15px] pt-[3px]">
          {["Файл", "Правка", "Вид", "Вставка", "Инструменты", "Simulation", "Окно"].map((m) => <button key={m}>{m}</button>)}
        </div>
        <span className="mx-auto"><Svg s={16}><path d="M11 1 19 9 15 10 11 14 11 17 3 9 6 9 10 5Z" fill="#777" /><path d="M6 14 1 19" stroke="#777" strokeWidth="1.500" /></Svg></span>
      </div>
      <button className="mr-[10px] ml-[22px] flex w-6 justify-center" aria-label="Домой">{ic.home}</button>
      {quick.map((q, i) => (
        <React.Fragment key={i}>
          <button className="flex w-6 justify-center" aria-label="Команда">{q}</button>
          <span className={i === 4 ? "flex w-[20px] justify-center" : "flex w-[23px] justify-center"}><Down /></span>
        </React.Fragment>
      ))}
      <div className="flex h-[33px] w-[46px] border border-[#999]">
        <button className="flex flex-1 items-center justify-center bg-[#b5b5b5]" aria-label="Выбрать">{ic.arrow}</button>
        <span className="flex w-[14px] items-center justify-center"><Down /></span>
      </div>
      <button className="ml-[4px] flex w-6 justify-center" aria-label="Перестроить">{ic.light}</button>
      <button className="ml-[9px] flex w-6 justify-center" aria-label="Свойства">{ic.list}</button>
      <button className="ml-[9px] flex w-6 justify-center" aria-label="Параметры"><Settings size={19} strokeWidth={1.500} color="#444" /></button>
      <span className="flex w-[23px] justify-center"><Down /></span>
      <span className="mr-[4px] flex-1 text-center">Опора v2.SLDASM</span>
      <div className="flex h-[29px] w-[286px] items-center border border-[#bbb] bg-[#fafafa]">
        <span className="ml-[6px]"><Svg s={20}><rect width="20" height="20" fill="#333" /><path d="M4 4 11 10 4 16M11 16H16" stroke="#fff" strokeWidth="1.600" /></Svg></span>
        <input aria-label="Поиск команд" placeholder="Поиск команд" className="ml-[7px] w-[180px] flex-1 bg-transparent text-[13px] outline-none placeholder:text-[#666]" />
        <span className="mx-[7px] flex items-center gap-[8px]"><Search size={17} strokeWidth={1.500} color="#666" /><Down /></span>
      </div>
      <div className="ml-[5px] flex">
        <button className="flex w-[41px] items-center justify-center" aria-label="Войти"><CircleUserRound size={19} strokeWidth={1.400} color="#444" /></button>
        <button className="flex w-[41px] items-center justify-center" aria-label="Справка"><CircleHelp size={19} strokeWidth={1.400} color="#444" /></button>
        <button className="flex w-[41px] items-center justify-center" aria-label="Свернуть"><Svg s={11}><path d="M1 18H19" stroke="#333" strokeWidth="3" /></Svg></button>
        <button className="flex w-[41px] items-center justify-center" aria-label="Растянуть"><Svg s={16}><path d="M1 2H19V18H1ZM10 2V18M3 10H17M6 7 3 10 6 13M14 7 17 10 14 13" stroke="#333" strokeWidth="1.400" /></Svg></button>
        <button className="flex w-[41px] items-center justify-center" aria-label="Восстановить">{ic.win2}</button>
        <button className="flex w-[35px] items-center justify-center" aria-label="Закрыть"><Svg s={11}><path d="M1 1 19 19M19 1 1 19" stroke="#333" strokeWidth="3" /></Svg></button>
      </div>
    </div>
  );
}

function Rb({ w, icon, a, b, off }: { w: string; icon: React.ReactNode; a: string; b?: string; off?: boolean }) {
  return (
    <button className={"flex shrink-0 flex-col items-center whitespace-nowrap text-[13px] leading-5 " + w + (b ? " pt-[10px]" : " pt-[5px]") + (off ? " text-[#b4b4b4]" : " text-[#1a1a1a]")}>
      <span className="flex h-[22px] items-center">{icon}</span>
      <span>{a}</span>
      {b ? <span>{b}</span> : <span className="mt-[18px]"><Down /></span>}
    </button>
  );
}

function Ribbon() {
  return (
    <div className="flex h-[82px] border-b-2 border-[#808080] bg-[#f7f7f7] text-[13px]">
      <Rb w="w-[145px]" icon={ic.lens} a="Новое исследование" />
      <div className="my-[2px] w-px bg-[#c8c8c8]" />
      <Rb w="w-[84px]" icon={ic.mat} a="Применить" b="материал" />
      <Rb w="w-[117px]" icon={ic.eval} a="Средство оценки" b="моделирования" />
      <Rb w="w-[191px]" icon={ic.fix} a="Консультант по креплениям" />
      <Rb w="w-[239px]" icon={ic.load} a="Консультант по внешним нагрузкам" />
      <Rb w="w-[196px]" icon={ic.bolt} a="Консультант по соединениям" />
      <Rb w="w-[81px]" icon={ic.shell} a="Менеджер" b="оболочки" />
      <Rb w="w-[191px]" icon={ic.plot} a="Запустить это исследование" />
      <div className="my-[2px] w-px bg-[#c8c8c8]" />
      <Rb w="w-[190px]" icon={ic.plotDoc} a="Консультант по результатам" />
      <Rb w="w-[136px]" icon={ic.greyBox} a="Деформированный" b="результат" off />
      <Rb w="w-[81px]" icon={ic.cmp} a="Сравнить" b="результаты" />
      <div className="ml-[2px] flex flex-col gap-[6px] pt-[5px]">
        <button className="flex h-5 items-center gap-[6px]">{ic.insight}Design Insight</button>
        <button className="flex h-5 items-center gap-[6px]">{ic.plot}Инструменты эпюры<span className="ml-[8px]"><Down /></span></button>
      </div>
      <button className="mr-[2px] ml-auto text-[17px]" aria-label="Ещё команды">»</button>
    </div>
  );
}

const swTabs: [string, string][] = [
  ["Сборка", "w-[69px]"], ["Расположение", "w-[120px]"], ["Эскиз", "w-[58px]"], ["Исправление", "w-[110px]"], ["Анализировать", "w-[125px]"],
  ["Добавления SOLIDWORKS", "w-[206px]"], ["Simulation", "w-[101px]"], ["MBD", "w-[56px]"], ["SOLIDWORKS CAM", "w-[156px]"], ["SOLIDWORKS Inspection", "w-[191px]"],
];

function SwTabs() {
  return (
    <div className="flex h-[28px] text-[14px] text-[#333]">
      {swTabs.map(([t, w]) => (
        <button key={t} className={w + (t === "Simulation" ? " shrink-0 whitespace-nowrap border-r border-[#808080] bg-[#f7f7f7] font-bold text-[#333]" : " shrink-0 whitespace-nowrap border-r border-b-2 border-[#808080] bg-[#d4d4d4]")}>{t}</button>
      ))}
      <div className="mr-[6px] ml-auto grid w-[130px] grid-cols-5 place-items-center opacity-60">
        <Svg s={15}><path d="M2 1H18V19H2ZM6 1V19" stroke="#444" strokeWidth="1.500" /><path d="M13 6V14L8 10Z" fill="#444" /></Svg>
        <Svg s={15}><path d="M2 1H18V19H2ZM14 1V19" stroke="#444" strokeWidth="1.500" /><path d="M7 6V14L12 10Z" fill="#444" /></Svg>
        <Svg s={11}><path d="M1 18H19" stroke="#333" strokeWidth="3" /></Svg>
        <Svg s={15}><path d="M1 8H12V18H1ZM7 8V2H19V12H12" stroke="#333" strokeWidth="1.600" /></Svg>
        <Svg s={12}><path d="M1 1 19 19M19 1 1 19" stroke="#333" strokeWidth="2" /></Svg>
      </div>
    </div>
  );
}

type Row = { lv: 0 | 1 | 2; open?: "d" | "r"; icon: React.ReactNode; icon2?: React.ReactNode; t: string; bold?: boolean; sel?: boolean };

const sym = (c: string) => (
  <span className="relative">
    {ic.plot}
    <span className="absolute -top-[4px] -right-[2px] text-[10px] leading-[12px] italic">{c}</span>
  </span>
);

const treeA: Row[] = [
  { lv: 1, open: "r", icon: ic.part, icon2: ic.cap, t: "(ф) Крестовина<1> (1<Co" },
  { lv: 1, open: "d", icon: ic.part, icon2: ic.cap, t: "(-) Вал<2> (Default<<Defa" },
  { lv: 2, open: "r", icon: ic.folderClip, t: "Сопряжения в Сборка1" },
  { lv: 2, icon: ic.folderHist, t: "History" },
  { lv: 2, icon: ic.folderSens, t: "Sensors" },
];
const treeB: Row[] = [
  { lv: 0, icon: ic.study, t: "Сборка попытка 2 (-По умолчанию" },
  { lv: 1, open: "d", icon: ic.partOk, t: "Детали" },
  { lv: 2, open: "r", icon: ic.mesh, icon2: ic.tetra, t: "Вал-2 (-Легированная ста" },
  { lv: 2, open: "r", icon: ic.mesh, icon2: ic.tetra, t: "Крестовина-1 (-Легирова" },
  { lv: 2, open: "r", icon: ic.mesh, icon2: ic.tetra, t: "Ступица-2 (-Легированна" },
  { lv: 1, open: "d", icon: ic.bolt, t: "Соединения" },
  { lv: 2, open: "r", icon: ic.contact, t: "Контакты компонентов" },
  { lv: 1, open: "d", icon: ic.fix, t: "Крепления" },
  { lv: 2, icon: ic.fixed, t: "Зафиксированный-1" },
  { lv: 1, open: "d", icon: ic.load, t: "Внешние нагрузки" },
  { lv: 2, icon: ic.force, t: "Сила-1 (:На объект: 2 250 N:)" },
  { lv: 1, icon: ic.meshG, t: "Сетка" },
  { lv: 1, icon: ic.params, t: "Параметры результатов" },
  { lv: 1, open: "d", icon: ic.folderRes, t: "Результаты", bold: true },
  { lv: 2, icon: sym("σ"), t: "Напряжение1 (-vonMises-)" },
  { lv: 2, icon: sym("u"), t: "Перемещение1 (-Расположе" },
  { lv: 2, icon: sym("ε"), t: "Деформация1 (-Эквивалент-" },
  { lv: 2, icon: <span className="relative">{ic.plot}<span className="absolute -top-px right-0 h-[10px] w-[4px] border border-black bg-[#30b040]" /></span>, t: "Запас прочности1 (-FOS-)", bold: true, sel: true },
];

function Tree({ rows }: { rows: Row[] }) {
  return (
    <ul className="min-w-0 flex-1 overflow-hidden text-[14px] text-[#1a1a1a]">
      {rows.map((r) => (
        <li key={r.t} className={"flex h-6 items-center whitespace-nowrap " + (r.lv === 0 ? "" : r.lv === 1 ? "pl-[4px]" : "pl-[27px]")}>
          {r.lv > 0 && (
            <span className="flex w-[17px] shrink-0">
              {r.open && <svg width="9" height="9" viewBox="0 0 9 9"><path d={r.open === "r" ? "M2 0 7 4.500 2 9Z" : "M0 2H9L4.500 7Z"} fill="#555" /></svg>}
            </span>
          )}
          <button className={"flex h-[23px] items-center gap-1 " + (r.sel ? "border border-[#3c8cc4] bg-[#a8c9e4] pr-[4px] pl-px font-bold text-black" : r.lv === 0 ? "" : r.bold ? "px-[2px] font-bold text-black" : "px-[2px]")}>
            {r.icon}{r.icon2}<span>{r.t}</span>
          </button>
        </li>
      ))}
    </ul>
  );
}

const Dot = () => <span className="h-[6px] w-[6px] rounded-full border border-[#999] bg-[#ccc]" />;

function Filter({ label }: { label: string }) {
  return (
    <label className="mr-[2px] ml-[3px] flex h-[32px] items-center border border-[#bbb] bg-[#f9f9f9] pl-px">
      {ic.funnel}<span className="mt-3"><Down /></span>
      <input aria-label={label} className="w-full min-w-0 bg-transparent outline-none" />
    </label>
  );
}

function LeftPanel() {
  return (
    <aside className="flex w-[273px] shrink-0 flex-col border-r border-[#808080] bg-[#f7f7f7] pr-[2px]">
      <div className="h-[6px] shrink-0 border-t-2 border-b-2 border-t-[#a4b6b8] border-b-[#c5c5c5]" />
      <div className="flex h-[20px] shrink-0 items-center justify-center border-b-2 border-[#c5c5c5]"><Dot /></div>
      <div className="mt-[4px] flex h-[26px] shrink-0 border-t-2 border-[#808080] bg-[#d4d4d4]">
        {[ic.asm, ic.list, ic.tree, ic.target, ic.ball].map((x, i) => (
          <button key={i} aria-label="Вкладка дерева" className={"flex w-10 items-center justify-center border-r border-[#808080] " + (i ? "border-b-2" : "bg-[#f7f7f7]")}>{x}</button>
        ))}
        <span className="flex flex-1 items-center justify-center overflow-hidden border-b-2 border-[#808080]">{ic.fold}</span>
        <button aria-label="Влево" className="flex w-[23px] items-center justify-center border border-[#999] bg-[#f7f7f7]"><svg width="5" height="8" viewBox="0 0 5 8"><path d="M5 0V8L0 4Z" /></svg></button>
        <button aria-label="Вправо" className="flex w-[20px] items-center justify-center border border-l-0 border-[#999] bg-[#f7f7f7]"><svg width="5" height="8" viewBox="0 0 5 8"><path d="M0 0V8L5 4Z" /></svg></button>
      </div>
      <Filter label="Фильтр дерева" />
      <div className="flex">
        <Tree rows={treeA} />
        <div className="flex h-[123px] w-[18px] flex-col items-center bg-[#f0f0f0] pt-[3px] pb-[3px]">
          <ChevronUp size={15} strokeWidth={2.500} color="#444" /><div className="mt-[24px] h-[21px] w-full bg-[#cdcdcd]" /><ChevronDown size={15} strokeWidth={2.500} color="#444" className="mt-auto" />
        </div>
      </div>
      <div className="mt-px flex h-[19px] shrink-0 items-center bg-[#f0f0f0] pr-[20px]"><ChevronLeft size={16} strokeWidth={2.500} color="#444" /><div className="ml-1 h-full w-[100px] bg-[#cdcdcd]" /><ChevronRight size={16} strokeWidth={2.500} color="#444" className="ml-auto" /></div>
      <div className="mt-[3px] h-[2px] shrink-0 bg-[#c5c5c5]" />
      <div className="flex h-[15px] shrink-0 items-center justify-center border-b-2 border-[#c5c5c5]"><Dot /></div>
      <Filter label="Фильтр исследования" />
      <Tree rows={treeB} />
    </aside>
  );
}

function Cyl({ x, y, rx, ry, dx, dy, g = "url(#mb)" }: { x: number; y: number; rx: number; ry: number; dx: number; dy: number; g?: string }) {
  const sx = Math.round(ry * 0.174), sy = Math.round(ry * 0.985);
  return <path d={`M${x + sx} ${y - sy}L${x + dx + sx} ${y + dy - sy}A${rx} ${ry} 10 0 1 ${x + dx - sx} ${y + dy + sy}L${x - sx} ${y + sy}Z`} fill={g} stroke="#100" strokeWidth="2.500" />;
}
const El = ({ x, y, rx, ry, f = "#c80000" }: { x: number; y: number; rx: number; ry: number; f?: string }) => (
  <ellipse cx={x} cy={y} rx={rx} ry={ry} transform={`rotate(10 ${x} ${y})`} fill={f} stroke="#100" strokeWidth="2.500" />
);

const loads: [number, number, number][] = [[1290, 915, 97], [1295, 930, 88], [1293, 940, 88], [1310, 960, 98], [1300, 968, 94], [1300, 1018, 103], [1285, 1055, 88], [1272, 1062, 80], [1280, 1075, 97], [1268, 1070, 85], [1250, 1088, 92]];

function Model() {
  const s = { stroke: "#100", strokeWidth: 2.5, fill: "none" };
  return (
    <svg className="absolute top-10 left-[529px]" width="640" height="640" viewBox="0 0 1568 1568" role="img" aria-label="Модель опоры">
      <defs>
        <linearGradient id="mb" x1=".14" y1="0" x2="0" y2="1"><stop offset="0" stopColor="#6a0000" /><stop offset=".14" stopColor="#920000" /><stop offset=".4" stopColor="#aa0000" /><stop offset=".65" stopColor="#880000" /><stop offset=".85" stopColor="#500000" /><stop offset="1" stopColor="#1c0000" /></linearGradient>
        <linearGradient id="hole" x1="0" y1="0" x2="0" y2="1"><stop offset="0" stopColor="#3a0000" /><stop offset=".5" stopColor="#a00000" /><stop offset="1" stopColor="#b80000" /></linearGradient>
        <linearGradient id="tip"><stop offset="0" stopColor="#7a0000" /><stop offset=".7" stopColor="#983000" /><stop offset=".88" stopColor="#a08a00" /><stop offset="1" stopColor="#2a8a00" /></linearGradient>
        <linearGradient id="la"><stop offset="0" stopColor="#900000" /><stop offset=".3" stopColor="#ff0000" /><stop offset="1" stopColor="#b80000" /></linearGradient>
        <linearGradient id="lb"><stop offset="0" stopColor="#4a0000" /><stop offset=".45" stopColor="#c80000" /><stop offset="1" stopColor="#b00000" /></linearGradient>
      </defs>
      <Cyl x={1300} y={1008} rx={14} ry={34} dx={108} dy={18} g="url(#tip)" />
      <Cyl x={155} y={1042} rx={58} ry={115} dx={220} dy={44} />
      <Cyl x={890} y={925} rx={40} ry={85} dx={375} dy={73} />
      <Cyl x={479} y={839} rx={87} ry={171} dx={339} dy={68} />
      <path d="M275 975 310 990H345L405 960 440 1000 275 1085Z" fill="url(#la)" />
      <path d="M275 1085 440 1000 515 1022 455 1052Q432 1062 432 1100L400 1060Z" fill="#480000" />
      <path d="M515 1022 455 1052Q432 1062 432 1100M345 990 400 963M380 1030 425 1003" {...s} />
      <path d="M748 312 780 320V360L692 680Q685 705 672 717L620 690Q665 675 680 640L752 350Z" fill="#c40000" />
      <path d="M780 318 935 338Q880 360 872 380L790 680V710L800 732 825 758 672 722Q685 705 692 680L778 360Z" fill="#9c0000" />
      <path d="M745 314 752 350 680 640Q665 680 620 690M780 325V360L692 680Q685 705 672 717M925 340Q880 355 870 380L790 680Q786 705 798 732" {...s} />
      <Cyl x={703} y={186} rx={58} ry={115} dx={220} dy={46} />
      <path d="M665 925 783 1215 737 1205 682 1050Q670 1020 600 1020 650 985 665 925Z" fill="url(#lb)" />
      <path d="M665 925 828 948Q780 985 792 1015L878 1238 783 1220Z" fill="#a40000" />
      <path d="M828 948Q775 980 790 1010 805 975 828 948Z" fill="#180000" />
      <path d="M668 930 783 1215M600 1020Q665 1015 682 1050L737 1205M790 1010 878 1236" {...s} />
      <Cyl x={707} y={1317} rx={58} ry={115} dx={220} dy={44} />
      <El x={703} y={186} rx={58} ry={115} /><El x={703} y={186} rx={35} ry={68} f="url(#hole)" />
      <El x={707} y={1317} rx={58} ry={115} /><El x={707} y={1317} rx={35} ry={68} f="url(#hole)" />
      <El x={155} y={1042} rx={58} ry={115} /><El x={155} y={1042} rx={35} ry={68} f="url(#hole)" />
      <El x={479} y={839} rx={87} ry={171} /><El x={479} y={840} rx={58} ry={114} /><El x={479} y={840} rx={43} ry={85} />
      {loads.map(([x, y, l]) => (
        <g key={x + "-" + y}><path d={`M${x + 20} ${y + 4}l${l - 20} ${Math.round(l * 0.18)}`} stroke="#a000a0" strokeWidth="7" /><path d={`M${x - 4} ${y}l34-12-6 34Z`} fill="#e800e8" /></g>
      ))}
      <g fill="#00cc00" stroke="#007a00" strokeWidth="2"><path d="M103 970l14-3 3 20-14 4ZM118 975l32 8v8l-32-6ZM126 978l14-4v20l-12 4ZM145 1020l10-30 14 20 15-22 5 16-14 10 18 4 2 16-16-8-22 4-2 18-10-4ZM133 1042l26 2v8l-26-2Z" /></g>
    </svg>
  );
}

const fos = ["1,205e+06", "1,085e+06", "9,644e+05", "8,438e+05", "7,233e+05", "6,027e+05", "4,822e+05", "3,616e+05", "2,411e+05", "1,206e+05", "5,985e+00"];

const hud: React.ReactNode[] = [ic.zoom, ic.zoomArea, ic.wand, ic.section, ic.annot, ic.cube, 0, ic.cyl, 0, ic.eye, 0, ic.ballEdit, ic.ballScene, 0, ic.screen, 0];

function Viewport() {
  return (
    <main className="relative flex-1 overflow-hidden">
      <div className="absolute top-[5px] left-[644px] flex h-[20px] items-center opacity-80">
        {hud.map((h, i) => (h === 0 ? <span key={i} className="flex w-[14px] justify-center"><Down /></span> : <button key={i} aria-label="Вид" className="flex w-[26px] justify-center">{h}</button>))}
      </div>
      <div className="absolute top-[16px] left-[21px] text-[14px] leading-5 whitespace-nowrap text-black">
        <p>Имя модели: Опора v2</p>
        <p>Название исследования: Сборка попытка 2(-По умолчанию-)</p>
        <p>Тип эпюры: Запас прочности Запас прочности1</p>
        <p>Критерий : Максимальное напряжение von Mises</p>
        <p>Распределение запаса прочности: Мин. коэффициент запаса прочности = 6</p>
      </div>
      <Model />
      <div className="absolute top-[149px] left-[1320px] text-[14px] leading-5 text-black">
        <div>FOS</div>
        <div className="mt-[19px] flex">
          <svg width="36" height="418" viewBox="0 0 36 418" aria-hidden="true">
            <defs><linearGradient id="fl" x1="0" y1="0" x2="0" y2="1"><stop offset="0" stopColor="#0000ff" /><stop offset=".25" stopColor="#00ffff" /><stop offset=".5" stopColor="#00ff00" /><stop offset=".75" stopColor="#ffff00" /><stop offset="1" stopColor="#ff0000" /></linearGradient></defs>
            <rect y="16" width="32" height="401" fill="url(#fl)" />
            <path d="M0 16.500H36M32 56.500h4M32 96.500h4M32 136.500h4M32 176.500h4M32 216.500h4M32 256.500h4M32 296.500h4M32 336.500h4M32 376.500h4M0 416.500H36" stroke="#000" />
          </svg>
          <div className="ml-[12px] flex flex-col gap-5">{fos.map((f) => <span key={f}>{f}</span>)}</div>
        </div>
      </div>
      <svg className="absolute top-[712px] left-[24px]" width="80" height="70" viewBox="0 0 80 70" aria-hidden="true">
        <path d="M27 56 34 30" stroke="#b0ffb0" strokeWidth="4" /><path d="M36 22 39 34 30 32Z" fill="#00b000" />
        <path d="M27 56 14 50" stroke="#d00000" strokeWidth="4" /><path d="M27 56 48 61" stroke="#0000a0" strokeWidth="4" /><path d="M59 63 48 66 50 57Z" fill="#0000a0" />
        <circle cx="27" cy="56" r="2.500" fill="#00a000" />
        <text x="37" y="15" fontSize="9" fill="#60e060" fontFamily="Noto Sans">Y</text>
        <text x="4" y="47" fontSize="9" fill="#f06060" fontFamily="Noto Sans">X</text>
        <text x="62" y="66" fontSize="9" fill="#5050f0" fontFamily="Noto Sans">Z</text>
      </svg>
      <div className="absolute top-[380px] left-[-1px] flex h-[49px] w-[12px] items-center justify-center border border-l-0 border-[#808080] bg-[#f7f7f7]"><Dot /></div>
      <nav className="absolute top-[29px] right-0 w-[33px] border border-r-0 border-[#808080]">
        {[ic.globe, ic.home, ic.books, ic.folder, ic.yellow, ic.ball, ic.list, ic.chat].map((x, i) => (
          <button key={i} aria-label="Панель задач" className={"flex h-[30px] w-full items-center justify-center " + (i ? "border-t border-[#808080] bg-[#d4d4d4]" : "bg-[#f7f7f7]")}>{x}</button>
        ))}
      </nav>
    </main>
  );
}

function SwBottom() {
  return (
    <div className="bg-[#f7f7f7] text-[14px] text-[#1a1a1a]">
      <div className="flex h-[22px] border-t border-b-2 border-[#808080] text-[15px] leading-[19px]">
        <div className="flex w-[82px] border-r border-[#808080] bg-[#a3a3bb]">
          {["M6 2V14M14 2V14L7 8Z", "M12 2V14L5 8Z", "M5 2V14L12 8Z", "M4 2V14L11 8ZM13 2V14"].map((d) => (
            <button key={d} aria-label="Перейти" className="flex flex-1 items-center justify-center border border-[#8a8aa8]"><Svg s={16} vb="0 0 18 16"><path d={d} fill="#85859f" stroke="#85859f" /></Svg></button>
          ))}
        </div>
        <button className="w-[90px] border-r border-[#808080] bg-[#d4d4d4] pl-[8px]">Модель</button>
        <button className="w-[166px] border-r border-[#808080] bg-[#d4d4d4]">Трехмерные виды</button>
        <button className="w-[109px] border-r border-[#808080] bg-[#d4d4d4]">Анимация1</button>
        <button className="flex w-[185px] gap-[3px] border-r border-[#808080] pl-[8px] font-bold whitespace-nowrap text-black"><Svg s={13}><path d="M3 1l6 6M3 7l6-6M5 1v17M15 1v10M12 8l3 4 3-4" stroke="#333" strokeWidth="1.500" /></Svg>Сборка попытка 2</button>
      </div>
      <div className="flex h-[21px] items-center pt-[2px] pr-[2px] pl-px">
        <span className="flex-1">SOLIDWORKS Premium 2020 SP4.0</span>
        <span className="w-[158px]">Недоопределенный</span>
        <span className="w-[279px]">Редактируется Сборка</span>
        <span className="w-[98px]">Настройка</span>
        <svg width="6" height="4" viewBox="0 0 6 4"><path d="M0 4H6L3 0Z" fill="#444" /></svg>
        <span className="ml-[26px]"><Svg s={18}><path d="M1 6 12 1 19 9 18 13 9 19 2 10Z" fill="#ddd" stroke="#555" strokeWidth="1.300" /><path d="M5 8l4 6M9 6l4 6M13 5l3 5" stroke="#666" /></Svg></span>
      </div>
    </div>
  );
}

export default function App() {
  return (
    <div className="w-full bg-white font-['Noto_Sans',sans-serif]">
      <TabStrip />
      <AddressBar />
      <VkHeader />
      <PdfBar />
      <PdfViewer />
      <TaskBar><div className="pr-[7px]"><Clock /></div></TaskBar>
      <div className="mr-[322px] ml-[318px]">
        <SwTitle />
        <Ribbon />
        <div className="bg-[radial-gradient(ellipse_30%_45%_at_100%_0%,#f5f5f7,transparent),radial-gradient(ellipse_78%_50%_at_18%_0%,white_55%,transparent),linear-gradient(to_bottom,#e4e6ee_0%,#dbdeea_28%,#dde1ea_49%,#fafafc_66%,#ffffff_75%,#f6f7fa_100%)]">
          <SwTabs />
          <div className="flex h-[837px]">
            <LeftPanel />
            <Viewport />
          </div>
        </div>
        <SwBottom />
        <TaskBar>
          <div className="flex items-center">
            <span className="flex w-[31px] justify-center"><ChevronUp size={20} strokeWidth={1.500} /></span>
            <span className="flex w-[31px] justify-center"><Svg s={20}><path d="M5 6H18V15H5ZM18 9h2v3h-2M2 3v4M5 3v4M1 6h5v3H3v4" stroke="#fff" strokeWidth="1.300" /><path d="M7 8H15V13H7Z" fill="#fff" /></Svg></span>
            <span className="flex w-[31px] justify-center"><Svg s={18}><path d="M2 18A16 16 0 0 1 18 2M7 18A11 11 0 0 1 18 7M11 18A7 7 0 0 1 18 11" stroke="#fff" strokeWidth="1.300" /><circle cx="16.500" cy="17" r="2" fill="#fff" /></Svg></span>
            <span className="flex w-[27px] justify-center"><Svg s={20}><path d="M1 7H4L9 3V17L4 13H1ZM12 7l6 6M18 7l-6 6" stroke="#fff" strokeWidth="1.300" /></Svg></span>
            <span className="ml-[3px] w-[46px] text-center text-[14px]">ENG</span>
            <span className="ml-[6px]"><Clock /></span>
            <span className="relative mr-[4px] ml-[22px] flex pt-[2px]">
              <Svg s={24}><path d="M1 1H18V15H10L6 19V15H1Z" fill="#fff" /><path d="M4 4.500H15M4 8H15M4 11.500H12" stroke="#08421f" strokeWidth="1.200" /></Svg>
              <span className="absolute top-[12px] left-[9px] flex h-[20px] w-[20px] items-center justify-center rounded-full border border-[#7fae8e] bg-[#08421f] text-[12px]">1</span>
            </span>
            <span className="ml-[17px] h-[50px] w-px bg-[#5b8a69]" /><span className="w-[5px]" />
          </div>
        </TaskBar>
      </div>
    </div>
  );
}
